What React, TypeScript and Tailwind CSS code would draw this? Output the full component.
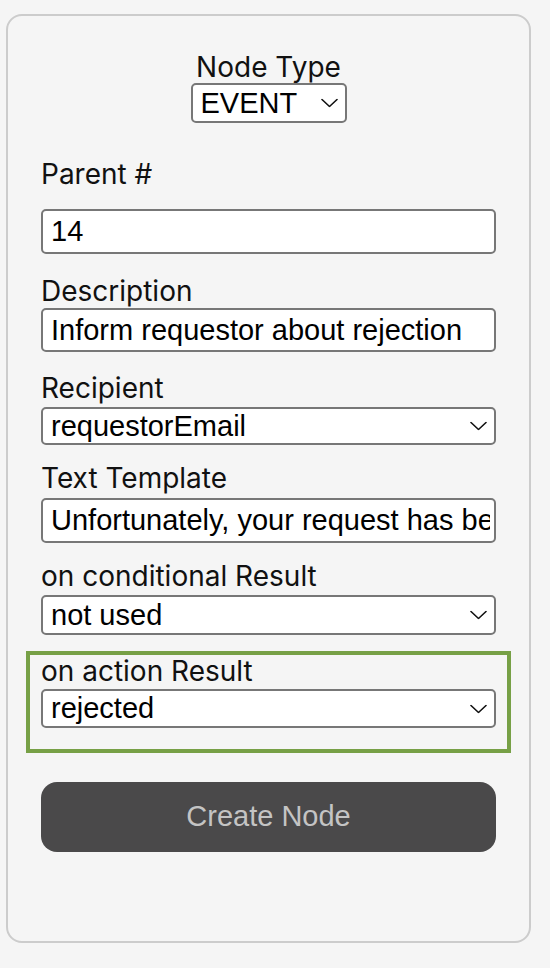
import React from "react"

function Chevron({ className }: { className?: string }) {
  return (
    <svg
      className={className}
      width="17"
      height="9"
      viewBox="0 0 17 9"
      fill="none"
      stroke="#111"
      strokeWidth="1.6"
      strokeLinecap="round"
      strokeLinejoin="round"
    >
      <polyline points="1,1 8.5,8 16,1" />
    </svg>
  )
}

function Label({ children, className = "" }: { children: React.ReactNode; className?: string }) {
  return (
    <label className={`block font-['Inter',sans-serif] text-[28px] leading-[29px] text-[#111] ${className}`}>
      {children}
    </label>
  )
}

const fieldBase =
  "block w-full rounded-[5px] border-2 border-[#777] bg-white pl-[8px] font-['Liberation_Sans',Arial,sans-serif] text-[29px] text-black outline-none"

function TextField({ value, className = "" }: { value: string; className?: string }) {
  return <input readOnly value={value} className={`${fieldBase} pr-[4px] ${className}`} />
}

function SelectField({
  value,
  options,
  className = "",
}: {
  value: string
  options: string[]
  className?: string
}) {
  return (
    <div className={`relative ${className}`}>
      <select
        value={value}
        onChange={() => {}}
        className={`${fieldBase} h-full appearance-none pr-[34px] leading-[33px]`}
      >
        {options.map((o) => (
          <option key={o}>{o}</option>
        ))}
      </select>
      <Chevron className="pointer-events-none absolute right-[9px] top-1/2 -translate-y-1/2" />
    </div>
  )
}

export default function App() {
  return (
    <div className="min-h-screen bg-[#f5f5f5] pl-[6px] pr-[19px] pt-[14px]">
      <div className="flex h-[929px] flex-col rounded-[16px] border-2 border-[#cccccc] bg-[#f5f5f5] px-[33px] pt-[37px]">
        {/* node type */}
        <div className="flex flex-col items-center">
          <Label>Node Type</Label>
          <SelectField
            value="EVENT"
            options={["EVENT", "ACTION", "CONDITION"]}
            className="mt-px h-[40px] w-[156px]"
          />
        </div>

        <Label className="mt-[37px]">Parent #</Label>
        <TextField value="14" className="mt-[20px] h-[45px]" />

        <Label className="mt-[23px]">Description</Label>
        <TextField value="Inform requestor about rejection" className="mt-[2px] h-[44px]" />

        <Label className="mt-[22px]">Recipient</Label>
        <SelectField
          value="requestorEmail"
          options={["requestorEmail", "approverEmail"]}
          className="mt-[4px] h-[38px]"
        />

        <Label className="mt-[19px]">Text Template</Label>
        <TextField
          value="Unfortunately, your request has been rejected."
          className="mt-[5px] h-[45px]"
        />

        <Label className="mt-[19px]">on conditional Result</Label>
        <SelectField
          value="not used"
          options={["not used", "true", "false"]}
          className="mt-[4px] h-[40px]"
        />

        <div className="-mx-[15px] mt-[16px] border-4 border-[#77a046] px-[11px] pb-[21px] pt-[2px]">
          <Label>on action Result</Label>
          <SelectField
            value="rejected"
            options={["not used", "approved", "rejected"]}
            className="mt-[3px] h-[39px]"
          />
        </div>

        <button className="mt-[29px] h-[70px] w-full rounded-[16px] bg-[#4a494a] font-['Liberation_Sans',Arial,sans-serif] text-[29px] text-[#c4c4c4]">
          Create Node
        </button>
      </div>
    </div>
  )
}
